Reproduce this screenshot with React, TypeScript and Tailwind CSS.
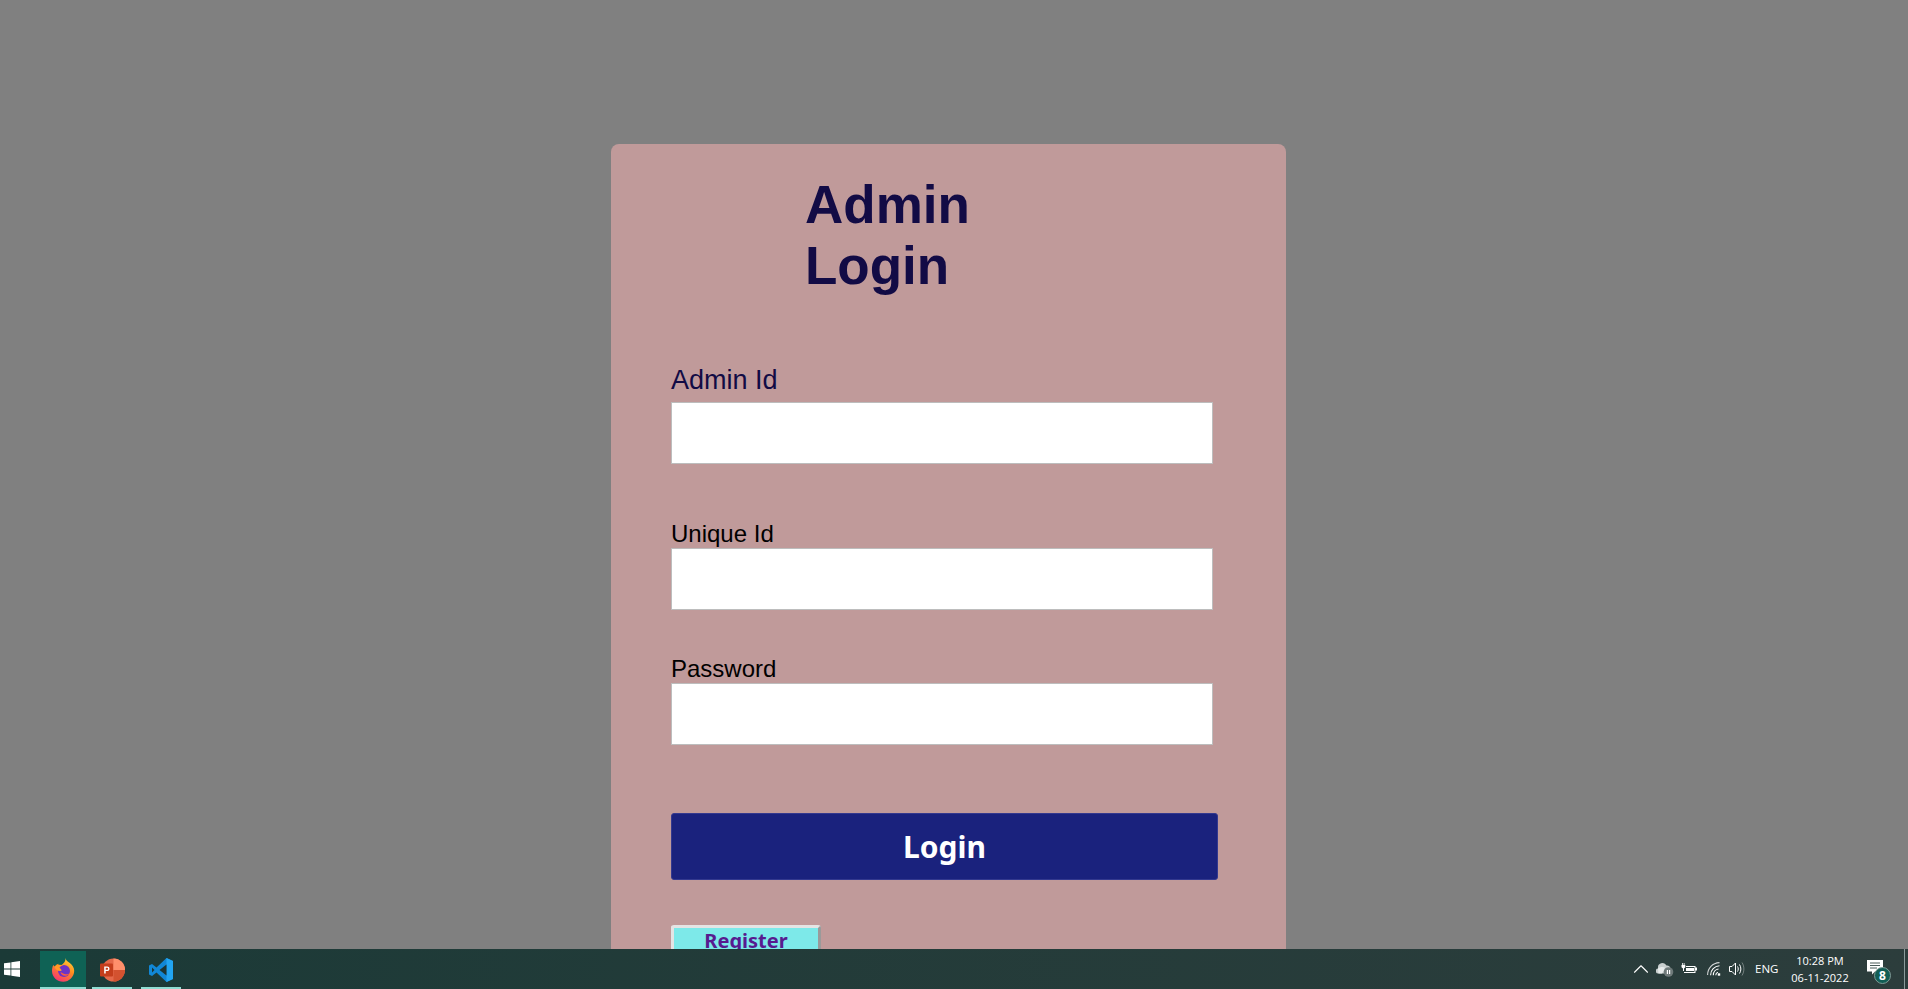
import { ChevronUp } from "lucide-react";

function Field({ label, labelClass, className }: { label: string; labelClass: string; className: string }) {
  return (
    <div className={className}>
      <label className={labelClass}>{label}</label>
      <input
        type="text"
        className="block w-[542px] h-[62px] bg-white border border-[#bdbdbd] outline-none"
      />
    </div>
  );
}

function WindowsLogo() {
  return (
    <svg width="16" height="16" viewBox="0 0 16 16" fill="#ffffff">
      <path d="M0 2.300 6.500 1.400V7.600H0Z" />
      <path d="M7.300 1.300 16 0V7.600H7.300Z" />
      <path d="M0 8.400H6.500V14.600L0 13.700Z" />
      <path d="M7.300 8.400H16V16L7.300 14.700Z" />
    </svg>
  );
}

function FirefoxLogo() {
  return (
    <svg width="24" height="24" viewBox="0 0 24 24">
      <defs>
        <linearGradient id="ffOuter" x1="0.75" y1="0" x2="0.25" y2="1">
          <stop offset="0" stopColor="#ffd23a" />
          <stop offset="0.45" stopColor="#ff8a1f" />
          <stop offset="1" stopColor="#f5307a" />
        </linearGradient>
      </defs>
      <path
        d="M14.500 0c.3 2.200 2 3.300 4 4.800 3 2.200 4.700 4.800 4.700 8 0 6-5 11-11 11S1 19 1 13c0-2.200.4-4.300 1.400-6 .5.800 1 1.300 1.600 1.600.5-1.300 1.800-2.400 3.500-2.800-.2.700 0 1.300.6 1.800 3-.4 6.700-3 6.400-7.600Z"
        fill="url(#ffOuter)"
      />
      <circle cx="13" cy="13" r="6" fill="#6d33c7" />
      <path d="M3.500 9c2-2.300 5.500-2.800 8.500-1.500-1.800.3-3 1-3.600 2.200 1.500 1 2.200 2 2.100 3-2.600.9-5.700-.4-7-3.700Z" fill="#ff9a26" />
      <path d="M9.500 14c.5 3 3.500 4.500 6.500 3.500 1.500-.5 2.500-1.500 3-2.700-1.500 1.500-3.500 1.800-5.500 1.200-1.800-.5-3-1.200-4-2Z" fill="#ff5f3a" />
    </svg>
  );
}

function PowerPointLogo() {
  return (
    <svg width="25" height="24" viewBox="0 0 25 24">
      <circle cx="13.500" cy="12" r="11.500" fill="#e4694a" />
      <path d="M13.500.5A11.500 11.500 0 0 1 25 12H13.500Z" fill="#ff8f6b" />
      <path d="M13.500 12H25A11.500 11.500 0 0 1 13.500 23.500Z" fill="#d35230" />
      <rect x="0" y="5.500" width="13" height="13" rx="1" fill="#c43e1c" />
      <path d="M4.200 15.500V8.500h2.900c1.500 0 2.400.8 2.400 2.200s-1 2.300-2.500 2.300H5.700v2.500ZM5.700 11.800h1.200c.8 0 1.200-.4 1.200-1.100s-.4-1-1.200-1H5.700Z" fill="#ffffff" />
    </svg>
  );
}

function VsCodeLogo() {
  return (
    <svg width="24" height="24" viewBox="0 0 24 24">
      <path d="M17.500 0 24 3V21L17.500 24 7.500 14.500 3 18 0 16.500V7.500L3 6 7.500 9.500Z" fill="#1187d6" />
      <path d="M17.500 0 24 3V21L17.500 24Z" fill="#22a5f1" />
      <path d="M17.500 6.500 10.500 12 17.500 17.500Z" fill="#1c3533" />
      <path d="M3 9.500 5.500 12 3 14.500Z" fill="#1c3533" />
    </svg>
  );
}

function TaskbarApp({ active, className, children }: { active?: boolean; className: string; children: React.ReactNode }) {
  return (
    <div className={`relative h-[38px] self-end flex items-center justify-center ${active ? "bg-[#0f6255]" : ""} ${className}`}>
      {children}
      <div className="absolute bottom-0 left-0 right-0 h-[2px] bg-[#8fdcd2]" />
    </div>
  );
}

function CloudPaused() {
  return (
    <svg width="18" height="16" viewBox="0 0 18 16">
      <path d="M2.500 12.500a2.500 2.500 0 0 1-.4-5A4.500 4.500 0 0 1 10.500 4.500 3.500 3.500 0 0 1 14.500 8v2H9v2.500Z" fill="#c9cfcf" />
      <path d="M2 7.500C4 6 7 5.500 9.500 7L6 12.500H2.500Z" fill="#e8ecec" />
      <circle cx="12.500" cy="11" r="4.800" fill="#6f7a7a" />
      <rect x="10.800" y="9" width="1.200" height="4" fill="#ffffff" />
      <rect x="13" y="9" width="1.200" height="4" fill="#ffffff" />
    </svg>
  );
}

function BatteryPlug() {
  return (
    <svg width="16" height="12" viewBox="0 0 16 12" fill="#ffffff">
      <path d="M1 0h.8v2h.9V0h.8v2h.8v2.300L3 5.500V8H2V5.500L.5 4.300V2H1Z" />
      <path d="M5 3h9.500v1.500h1.500v3h-1.500V10H3V9h10.500V4H5Z" />
      <rect x="5" y="5" width="8" height="3" />
    </svg>
  );
}

function WifiIcon() {
  return (
    <svg width="14" height="14" viewBox="0 0 14 14" fill="none" stroke="#ffffff" strokeWidth="1.100">
      <path d="M.6 13C.6 6 5.500 1 12.500.6" opacity="0.8" />
      <path d="M3.600 13.200C3.600 8 7.500 4.200 12.500 3.800" />
      <path d="M6.300 13.200C6.300 9.800 8.800 7.400 11.500 7" />
      <path d="M8.800 13.200C8.800 11.600 9.800 10.500 11 10.200" />
      <rect x="10.800" y="11.300" width="2.400" height="2.400" fill="#ffffff" stroke="none" />
    </svg>
  );
}

function SpeakerIcon() {
  return (
    <svg width="16" height="16" viewBox="0 0 16 16" fill="none" stroke="#ffffff" strokeWidth="1">
      <path d="M.5 5.500H3L6.500 2V14L3 10.500H.5Z" />
      <path d="M8.500 5.500C9.500 7 9.500 9 8.500 10.500" />
      <path d="M10.500 3.500C12.300 6 12.300 10 10.500 12.500" />
      <path d="M13 1.500C15.500 5.500 15.500 10.500 13 14.500" opacity="0.35" />
    </svg>
  );
}

function NotificationIcon() {
  return (
    <div className="relative w-[24px] h-[23px]">
      <svg width="16" height="15" viewBox="0 0 16 15" className="absolute top-0 left-0">
        <path d="M0 0H16V11.500H8L5 14.500V11.500H0Z" fill="#ffffff" />
        <path d="M3 3H13M3 5.500H13M3 8H10" stroke="#4a5a59" strokeWidth="1" />
      </svg>
      <div className="absolute left-[7px] top-[7px] w-[17px] h-[17px] rounded-full bg-[#125e55] border border-[#7f9a96] flex items-center justify-center text-[12px] leading-none font-bold text-white">
        8
      </div>
    </div>
  );
}

export default function App() {
  return (
    <div className="h-screen flex flex-col overflow-hidden bg-[#808080] font-['Liberation_Sans',sans-serif]">
      <main className="flex-1 min-h-0 overflow-hidden pt-[144px] pl-[611px]">
        <div className="w-[675px] h-[900px] bg-[#c09a9a] rounded-[8px] pl-[60px]">
          <h1 className="ml-[134px] pt-[30px] text-[53px] leading-[61px] font-bold text-[#120b45]">
            Admin
            <br />
            Login
          </h1>

          <Field
            className="mt-[70px]"
            label="Admin Id"
            labelClass="block h-[36px] text-[27px] leading-[28px] text-[#120b45]"
          />
          <Field
            className="mt-[56px]"
            label="Unique Id"
            labelClass="block h-[28px] text-[24px] leading-[28px] text-black"
          />
          <Field
            className="mt-[45px]"
            label="Password"
            labelClass="block h-[28px] text-[24px] leading-[28px] text-black"
          />

          <button className="block mt-[68px] w-[547px] h-[67px] rounded-[3px] bg-[#1a227d] border border-[#33398f] text-white text-[30px] font-bold font-['Noto_Sans',sans-serif]">
            Login
          </button>

          <button className="block mt-[45px] w-[150px] h-[40px] rounded-[3px] bg-[#7de9e9] border-t-[3px] border-l-[3px] border-r-[3px] border-t-[#e4e4e4] border-l-[#e4e4e4] border-r-[#9a9a9a] text-[#571b8f] text-[20px] leading-[24px] font-bold font-['Noto_Sans',sans-serif] pb-[11px]">
            Register
          </button>
        </div>
      </main>

      <footer className="relative h-[40px] shrink-0 flex items-center bg-gradient-to-r from-[#1b3a37] to-[#2c3d3c] text-white font-['Open_Sans',sans-serif]">
        <div className="w-[40px] h-full flex items-center pl-[4px]">
          <WindowsLogo />
        </div>
        <TaskbarApp active className="w-[46px]">
          <FirefoxLogo />
        </TaskbarApp>
        <TaskbarApp className="w-[40px] ml-[6px]">
          <PowerPointLogo />
        </TaskbarApp>
        <TaskbarApp className="w-[40px] ml-[9px]">
          <VsCodeLogo />
        </TaskbarApp>

        <div className="ml-auto flex items-center h-full">
          <ChevronUp size={26} strokeWidth={1} className="text-white" />
          <div className="ml-[2px]"><CloudPaused /></div>
          <div className="ml-[7px]"><BatteryPlug /></div>
          <div className="ml-[10px]"><WifiIcon /></div>
          <div className="ml-[8px]"><SpeakerIcon /></div>
          <span className="ml-[10px] w-[23px] text-[11.500px] whitespace-nowrap">ENG</span>
          <div className="ml-[12px] w-[60px] text-center text-[11px] leading-[17px] whitespace-nowrap">
            <div>10:28 PM</div>
            <div>06-11-2022</div>
          </div>
          <div className="ml-[17px] mt-[5px]"><NotificationIcon /></div>
          <div className="ml-[13px] w-[4px] h-full border-l border-[#8a9a9a]" />
        </div>
      </footer>
    </div>
  );
}
